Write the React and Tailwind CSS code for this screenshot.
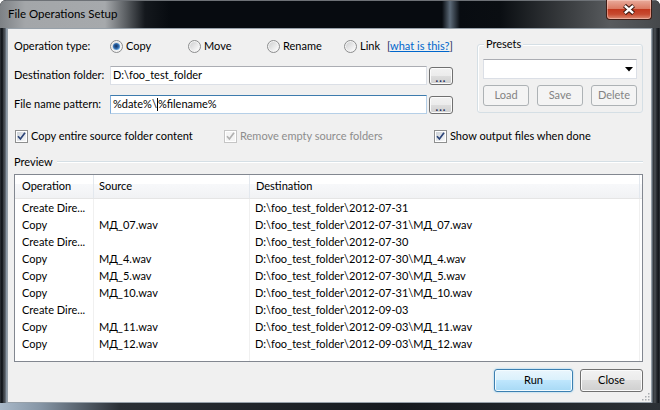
import React from 'react';

const rows = [
    ['Create Dire...', '', 'D:\\foo_test_folder\\2012-07-31'],
    ['Copy', 'МД_07.wav', 'D:\\foo_test_folder\\2012-07-31\\МД_07.wav'],
    ['Create Dire...', '', 'D:\\foo_test_folder\\2012-07-30'],
    ['Copy', 'МД_4.wav', 'D:\\foo_test_folder\\2012-07-30\\МД_4.wav'],
    ['Copy', 'МД_5.wav', 'D:\\foo_test_folder\\2012-07-30\\МД_5.wav'],
    ['Copy', 'МД_10.wav', 'D:\\foo_test_folder\\2012-07-31\\МД_10.wav'],
    ['Create Dire...', '', 'D:\\foo_test_folder\\2012-09-03'],
    ['Copy', 'МД_11.wav', 'D:\\foo_test_folder\\2012-09-03\\МД_11.wav'],
    ['Copy', 'МД_12.wav', 'D:\\foo_test_folder\\2012-09-03\\МД_12.wav'],
];

const Radio = ({ checked, label, w }) => (
    <div className="flex items-center gap-[3px] shrink-0 whitespace-nowrap" style={{ width: w }}>
        <svg width="13" height="13" viewBox="0 0 13 13">
            <defs>
                <linearGradient id="radioBg" x1="0" y1="0" x2="1" y2="1">
                    <stop offset="0" stopColor="#cfd0d1" />
                    <stop offset="1" stopColor="#fdfdfd" />
                </linearGradient>
                <radialGradient id="radioDot" cx="0.45" cy="0.45" r="0.6">
                    <stop offset="0" stopColor="#16305a" />
                    <stop offset="0.55" stopColor="#2a65a8" />
                    <stop offset="1" stopColor="#86c0ef" />
                </radialGradient>
            </defs>
            <circle cx="6.5" cy="6.5" r="6" fill="#f4f4f4" stroke="#8b8c8d" />
            <circle cx="6.5" cy="6.5" r="4.5" fill="url(#radioBg)" />
            {checked && <circle cx="6.5" cy="6.5" r="3.6" fill="url(#radioDot)" />}
        </svg>
        <span>{label}</span>
    </div>
);

const Checkbox = ({ checked, disabled, label, w }) => (
    <div className="flex items-center gap-[3px] shrink-0 whitespace-nowrap" style={{ width: w }}>
        <svg width="13" height="13" viewBox="0 0 13 13">
            <defs>
                <linearGradient id="cbBg" x1="0" y1="0" x2="1" y2="1">
                    <stop offset="0" stopColor="#cdd2d8" />
                    <stop offset="1" stopColor="#f7f8f9" />
                </linearGradient>
            </defs>
            <rect x="0.5" y="0.5" width="12" height="12" fill="#fff" stroke={disabled ? '#c5c5c5' : '#8e8f8f'} />
            <rect x="2" y="2" width="9" height="9" fill={disabled ? '#f4f4f4' : 'url(#cbBg)'} />
            {checked && (
                <path d="M3 6.3 L5.4 9 L10 2.8" fill="none" stroke={disabled ? '#b0b0b0' : '#2b4478'} strokeWidth="1.7" />
            )}
        </svg>
        <span className={disabled ? 'text-[#8d8d8d]' : ''}>{label}</span>
    </div>
);

const WinButton = ({ children, w, h, disabled, isDefault }) => {
    let look = 'border-[#707070] bg-[linear-gradient(#f2f2f2_0%,#ebebeb_50%,#dddddd_50%,#cfcfcf_100%)] shadow-[inset_0_0_0_1px_#fbfbfb]';
    if (disabled) look = 'border-[#adb2b5] bg-[#f4f4f4] text-[#838383]';
    if (isDefault) look = 'border-[#3c7fb1] bg-[linear-gradient(#eaf6fd_0%,#d9f0fc_50%,#bee6fd_50%,#a7d9f5_100%)] shadow-[inset_0_0_0_1px_#f2fbff,0_0_2px_#7fc8f0]';
    return (
        <div
            className={`border rounded-[3px] flex items-center justify-center shrink-0 ${look}`}
            style={{ width: w, height: h }}
        >
            {children}
        </div>
    );
};

const DotsButton = () => (
    <WinButton w={24} h={18}>
        <span className="text-[11px] leading-none text-[#1d2d58] tracking-[1px] pt-[3px] font-bold">...</span>
    </WinButton>
);

const FileOperationsSetup = () => {
    return (
        <div className="w-[660px] h-[410px] bg-[#0b0f14] rounded-t-[6px] overflow-hidden flex flex-col font-['Lato','Noto_Sans',sans-serif] text-[11px] text-black select-none">
            {/* Title bar */}
            <div className="h-[28px] shrink-0 flex items-center pl-[8px] border-t border-[#6d7176] bg-[linear-gradient(90deg,#7d8185_0px,#a3a6a9_25px,#a6a9ac_105px,#5e6266_125px,#14181d_145px,#070b10_170px,#070b10_442px,#5d6b79_450px,#080c11_460px,#0a0e12_500px,#35383b_560px,#585b5e_610px,#45484b_660px)]">
                <span className="-mt-[1px] text-[11.5px] whitespace-nowrap">
                    File Operations Setup
                </span>
                <div className="ml-auto mr-[8px] self-start -mt-px w-[46px] h-[20px] rounded-b-[4px] border border-t-0 border-[#3e1d16] bg-[linear-gradient(#e9ab9c_0%,#db7b64_45%,#c2391f_50%,#c74a30_75%,#dc8a72_100%)] shadow-[inset_0_0_0_1px_rgba(255,220,210,0.45)] flex items-center justify-center">
                    <svg width="14" height="11" viewBox="0 0 14 11">
                        <path d="M2.5 1.5 L11.5 9.5 M11.5 1.5 L2.5 9.5" stroke="#3b1a12" strokeWidth="4.4" />
                        <path d="M2.8 1.8 L11.2 9.2 M11.2 1.8 L2.8 9.2" stroke="#ffffff" strokeWidth="2.4" />
                    </svg>
                </div>
            </div>

            <div className="flex flex-1 min-h-0">
                {/* left frame */}
                <div className="w-[7px] bg-[linear-gradient(90deg,#3d4247_0px,#101419_1px,#1d2126_3px,#565c62_4px,#3a3f45_5px,#8b98a5_6px)]" />

                {/* Client area */}
                <div className="relative flex-1 flex flex-col bg-[#f0f0f0] border border-[#96a0a9] pl-[6px] pr-[8px]">
                    {/* Top section */}
                    <div className="flex pt-[9px]">
                        <div className="w-[439px] flex flex-col">
                            <div className="h-[16px] flex items-center whitespace-nowrap">
                                <span className="w-[96px] shrink-0">Operation type:</span>
                                <Radio checked label="Copy" w={78} />
                                <Radio label="Move" w={79} />
                                <Radio label="Rename" w={77} />
                                <Radio label="Link" w={43} />
                                <span>
                                    <span className="text-[#1a2a5a]">[</span>
                                    <span className="text-[#0066cc] underline">what is this?</span>
                                    <span className="text-[#1a2a5a]">]</span>
                                </span>
                            </div>
                            <div className="h-[19px] mt-[12px] flex items-center whitespace-nowrap">
                                <span className="w-[96px] shrink-0">Destination folder:</span>
                                <div className="w-[317px] h-[19px] bg-white border border-[#dbdfe6] border-t-[#abadb3] flex items-center pl-[2px]">
                                    D:\foo_test_folder
                                </div>
                                <div className="ml-[2px]">
                                    <DotsButton />
                                </div>
                            </div>
                            <div className="h-[19px] mt-[10px] flex items-center whitespace-nowrap">
                                <span className="w-[96px] shrink-0">File name pattern:</span>
                                <div className="w-[317px] h-[19px] bg-white border border-[#b5cfe7] border-t-[#3d7bad] border-l-[#84b0dc] flex items-center pl-[2px]">
                                    <span>%date%\</span>
                                    <span className="w-px h-[13px] bg-black" />
                                    <span>%filename%</span>
                                </div>
                                <div className="ml-[2px]">
                                    <DotsButton />
                                </div>
                            </div>
                        </div>

                        {/* Presets group */}
                        <div className="relative ml-[24px] mt-[6px] w-[166px] h-[69px] border border-[#d5dfe5] rounded-[3px] shadow-[inset_1px_1px_0_#ffffff] px-[5px] pt-[14px]">
                            <span className="absolute -top-[9px] left-[6px] px-[2px] bg-[#f0f0f0]">Presets</span>
                            <div className="h-[20px] bg-white border border-[#dbdfe6] border-t-[#abadb3] flex items-center justify-end pr-[3px]">
                                <svg width="8" height="5" viewBox="0 0 8 5">
                                    <path d="M0 0 H8 L4 4.5 Z" fill="#000" />
                                </svg>
                            </div>
                            <div className="flex justify-between mt-[6px]">
                                <WinButton w={46} h={21} disabled>Load</WinButton>
                                <WinButton w={46} h={21} disabled>Save</WinButton>
                                <WinButton w={46} h={21} disabled>Delete</WinButton>
                            </div>
                        </div>
                    </div>

                    {/* Checkbox row */}
                    <div className="h-[16px] mt-[14px] ml-[1px] flex items-center">
                        <Checkbox checked label="Copy entire source folder content" w={209} />
                        <Checkbox checked disabled label="Remove empty source folders" w={210} />
                        <Checkbox checked label="Show output files when done" w={200} />
                    </div>

                    {/* Preview */}
                    <div className="h-[16px] mt-[10px] flex items-center">
                        <span>Preview</span>
                        <div className="flex-1 ml-[4px] h-[2px] border-t border-[#d5dfe5] border-b border-b-white" />
                    </div>

                    {/* List view */}
                    <div className="mt-[4px] h-[188px] bg-white border border-[#828790] flex flex-col">
                        <div className="h-[24px] shrink-0 flex border-b border-[#e5e5e5] bg-[linear-gradient(#ffffff_0%,#ffffff_40%,#f7f8fa_41%,#f1f2f4_100%)]">
                            <div className="w-[79px] border-r border-[#e3e8ee] pl-[7px] flex items-center">Operation</div>
                            <div className="w-[156px] border-r border-[#e3e8ee] pl-[5px] flex items-center">Source</div>
                            <div className="w-[390px] border-r border-[#e3e8ee] pl-[6px] flex items-center">Destination</div>
                        </div>
                        <div className="flex flex-1">
                            <div className="w-[79px] border-r border-[#f0f0f0] pl-[7px]">
                                {rows.map((r, i) => (
                                    <div key={i} className="h-[17px] leading-[17px] whitespace-nowrap">{r[0]}</div>
                                ))}
                            </div>
                            <div className="w-[156px] border-r border-[#f0f0f0] pl-[5px]">
                                {rows.map((r, i) => (
                                    <div key={i} className="h-[17px] leading-[17px] whitespace-nowrap">{r[1]}</div>
                                ))}
                            </div>
                            <div className="w-[390px] border-r border-[#f0f0f0] pl-[5px]">
                                {rows.map((r, i) => (
                                    <div key={i} className="h-[17px] leading-[17px] whitespace-nowrap">{r[2]}</div>
                                ))}
                            </div>
                        </div>
                    </div>

                    {/* Bottom buttons */}
                    <div className="mt-[7px] flex justify-end gap-[7px]">
                        <WinButton w={79} h={23} isDefault>Run</WinButton>
                        <WinButton w={63} h={23}>Close</WinButton>
                    </div>

                    {/* resize grip */}
                    <svg className="absolute right-[1px] bottom-[1px]" width="10" height="10" viewBox="0 0 10 10">
                        {[[8, 2], [8, 5], [5, 5], [8, 8], [5, 8], [2, 8]].map(([x, y], i) => (
                            <rect key={i} x={x} y={y} width="1.5" height="1.5" fill="#a8acb0" />
                        ))}
                    </svg>
                </div>

                {/* right frame */}
                <div className="w-[8px] bg-[linear-gradient(90deg,#8b98a5_0px,#30353a_1px,#4a4f54_3px,#22262b_5px,#101419_7px,#3d4247_8px)]" />
            </div>

            {/* bottom frame */}
            <div className="h-[7px] shrink-0 bg-[linear-gradient(90deg,#a9b9c9_0px,#8696a6_40px,#2a2f35_120px,#15191e_400px,#2c3136_660px)]" />
        </div>
    );
};

export default function App() {
    return <FileOperationsSetup />;
}
